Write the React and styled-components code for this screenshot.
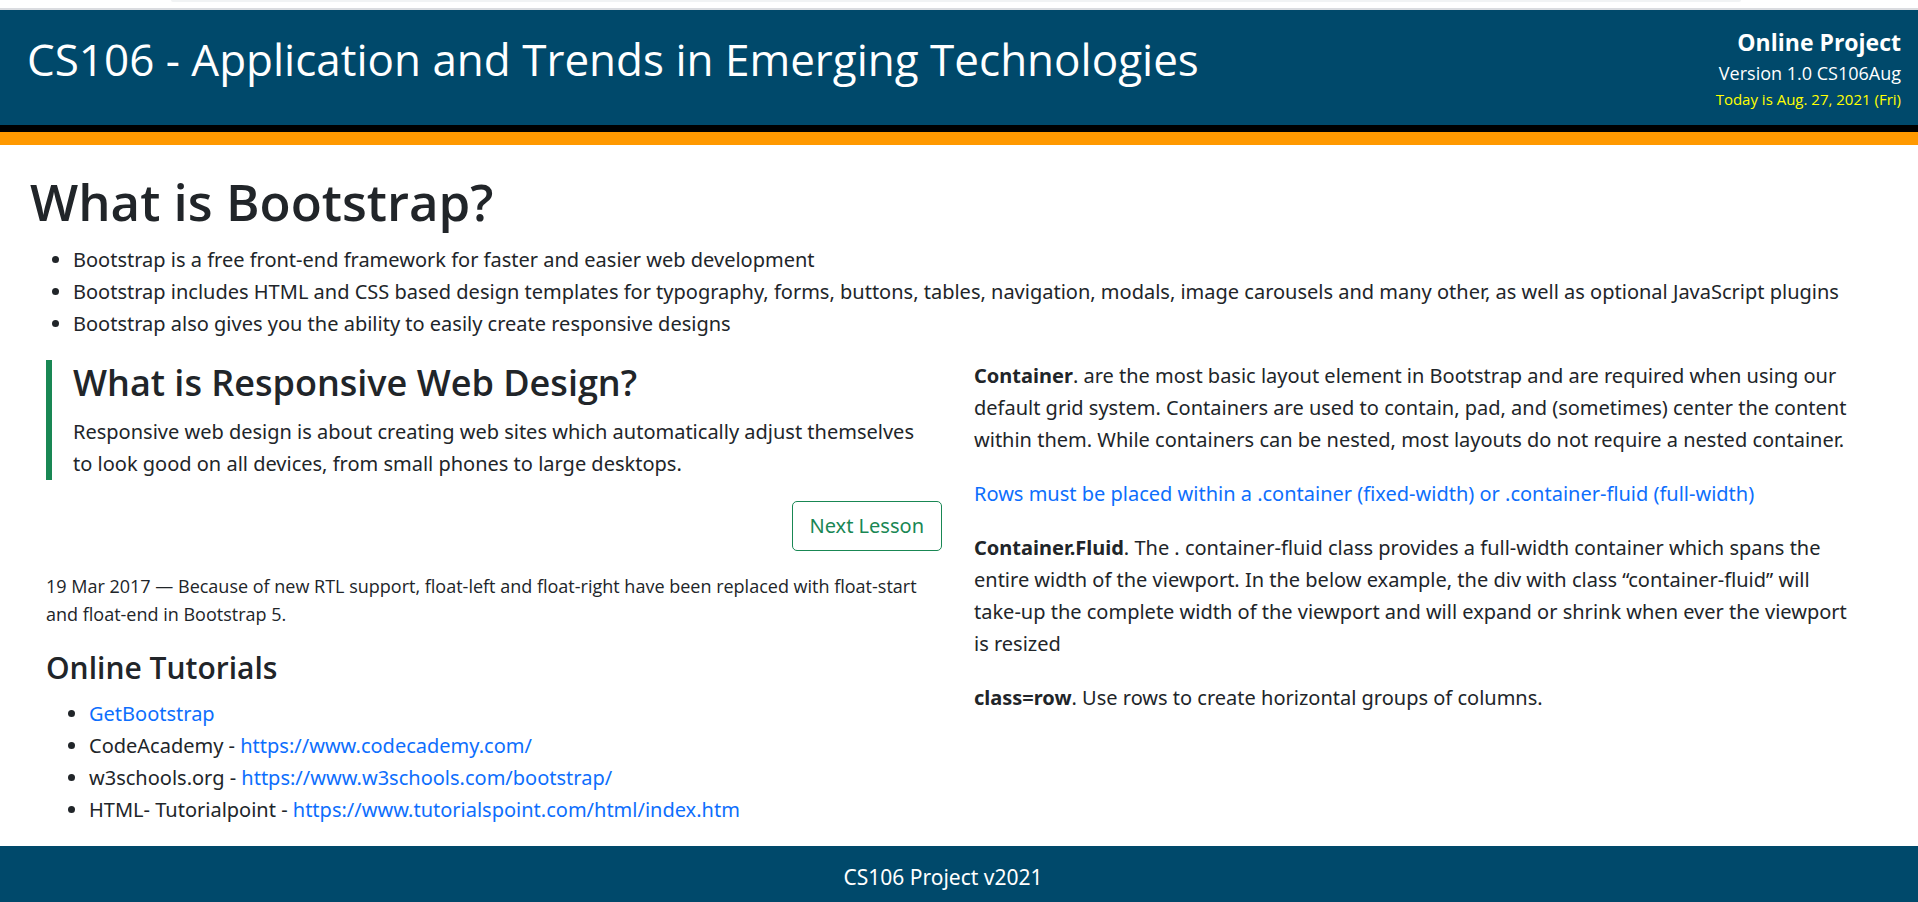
import React from "react";
import styled, { createGlobalStyle } from "styled-components";

const navy = "#00496b";
const green = "#198754";
const blue = "#0d6efd";
const headingFont = `"Segoe UI", "Open Sans", sans-serif`;
const bodyFont = `"Segoe UI", "Noto Sans", "Open Sans", sans-serif`;

const GlobalStyle = createGlobalStyle`
  *, *::before, *::after { box-sizing: border-box; }
  body {
    margin: 0;
    background: #fff;
    color: #212529;
    font-family: ${bodyFont};
    font-size: 20px;
    line-height: 32px;
  }
`;

const Page = styled.div`
  min-height: 100vh;
  display: flex;
  flex-direction: column;
`;

const BrowserEdge = styled.div`
  height: 10px;
  padding: 0 177px 0 171px;
  border-bottom: 2px solid #dadce0;
`;

const AddressBar = styled.div`
  height: 2px;
  background: #f1f3f4;
  border-radius: 0 0 8px 8px;
`;

const Header = styled.header`
  display: flex;
  justify-content: space-between;
  align-items: flex-start;
  padding: 14px 17px 14px 27px;
  color: #fff;
  background: ${navy};
  border-bottom: 7px solid #000;
  font-family: ${headingFont};
`;

const SiteTitle = styled.div`
  font-size: 44px;
  line-height: 70px;
`;

const SiteInfo = styled.div`
  text-align: right;
`;

const InfoLine = styled.div`
  font-size: ${(p) => p.$size}px;
  line-height: ${(p) => p.$line}px;
  font-weight: ${(p) => (p.$bold ? 700 : 400)};
  color: ${(p) => p.$color || "inherit"};
`;

const Stripe = styled.div`
  height: 13px;
  background: #ff9900;
`;

const Main = styled.main`
  flex: 1;
  padding: 24px 48px 20px 46px;
`;

const PageTitle = styled.h1`
  margin: 0 0 11px -16px;
  font-family: ${headingFont};
  font-size: 51px;
  line-height: 64px;
  font-weight: 600;
`;

const List = styled.ul`
  margin: 0 0 ${(p) => (p.$last ? 0 : 20)}px;
  padding-left: ${(p) => (p.$last ? 43 : 27)}px;
`;

const Columns = styled.div`
  display: grid;
  grid-template-columns: 1fr 1fr;
  gap: 32px;
`;

const Callout = styled.section`
  padding: 0 16px 0 21px;
  border-left: 6px solid ${green};
`;

const Reference = styled.div`
  padding-right: 12px;
`;

const SectionTitle = styled.h2`
  margin: 0 0 11px;
  font-family: ${headingFont};
  font-size: 36px;
  line-height: 45px;
  font-weight: 600;
`;

const SubTitle = styled.h3`
  margin: 0 0 11px;
  font-family: ${headingFont};
  font-size: 30px;
  line-height: 38px;
  font-weight: 600;
`;

const Text = styled.p`
  margin: 0 0 ${(p) => (p.$flush ? 0 : 22)}px;
`;

const Note = styled.p`
  margin: 0 0 21px;
  font-family: ${headingFont};
  font-size: 18px;
  line-height: 28px;
`;

const Actions = styled.div`
  display: flex;
  justify-content: flex-end;
  padding: 21px 0;
`;

const OutlineButton = styled.button`
  padding: 8px 17px;
  border: 1px solid ${green};
  border-radius: 5px;
  background: transparent;
  color: ${green};
  font: inherit;
  cursor: pointer;
`;

const Link = styled.a`
  color: ${blue};
  text-decoration: none;
`;

const Highlight = styled(Text)`
  color: ${blue};
`;

const Footer = styled.footer`
  padding: 15px 48px 9px 16px;
  text-align: center;
  font-size: 21px;
  color: #fff;
  background: ${navy};
`;

const facts = [
  "Bootstrap is a free front-end framework for faster and easier web development",
  "Bootstrap includes HTML and CSS based design templates for typography, forms, buttons, tables, navigation, modals, image carousels and many other, as well as optional JavaScript plugins",
  "Bootstrap also gives you the ability to easily create responsive designs",
];

const tutorials = [
  { prefix: "", label: "GetBootstrap", href: "https://getbootstrap.com/" },
  { prefix: "CodeAcademy - ", label: "https://www.codecademy.com/", href: "https://www.codecademy.com/" },
  { prefix: "w3schools.org - ", label: "https://www.w3schools.com/bootstrap/", href: "https://www.w3schools.com/bootstrap/" },
  { prefix: "HTML- Tutorialpoint - ", label: "https://www.tutorialspoint.com/html/index.htm", href: "https://www.tutorialspoint.com/html/index.htm" },
];

export default function App() {
  return (
    <Page>
      <GlobalStyle />
      <BrowserEdge>
        <AddressBar />
      </BrowserEdge>
      <Header>
        <SiteTitle>CS106 - Application and Trends in Emerging Technologies</SiteTitle>
        <SiteInfo>
          <InfoLine $size={23} $line={36} $bold>Online Project</InfoLine>
          <InfoLine $size={18} $line={27}>Version 1.0 CS106Aug</InfoLine>
          <InfoLine $size={15} $line={24} $color="#ffff00">Today is Aug. 27, 2021 (Fri)</InfoLine>
        </SiteInfo>
      </Header>
      <Stripe />
      <Main>
        <PageTitle>What is Bootstrap?</PageTitle>
        <List>
          {facts.map((fact) => (
            <li key={fact}>{fact}</li>
          ))}
        </List>
        <Columns>
          <div>
            <Callout>
              <SectionTitle>What is Responsive Web Design?</SectionTitle>
              <Text $flush>
                Responsive web design is about creating web sites which automatically adjust
                themselves to look good on all devices, from small phones to large desktops.
              </Text>
            </Callout>
            <Actions>
              <OutlineButton type="button">Next Lesson</OutlineButton>
            </Actions>
            <Note>
              19 Mar 2017 — Because of new RTL support, float-left and float-right have been
              replaced with float-start and float-end in Bootstrap 5.
            </Note>
            <SubTitle>Online Tutorials</SubTitle>
            <List $last>
              {tutorials.map((item) => (
                <li key={item.label}>
                  {item.prefix}
                  <Link href={item.href}>{item.label}</Link>
                </li>
              ))}
            </List>
          </div>
          <Reference>
            <Text>
              <b>Container</b>. are the most basic layout element in Bootstrap and are required
              when using our default grid system. Containers are used to contain, pad, and
              (sometimes) center the content within them. While containers can be nested, most
              layouts do not require a nested container.
            </Text>
            <Highlight>
              Rows must be placed within a .container (fixed-width) or .container-fluid
              (full-width)
            </Highlight>
            <Text>
              <b>Container.Fluid</b>. The . container-fluid class provides a full-width container
              which spans the entire width of the viewport. In the below example, the div with
              class “container-fluid” will take-up the complete width of the viewport and will
              expand or shrink when ever the viewport is resized
            </Text>
            <Text $flush>
              <b>class=row</b>. Use rows to create horizontal groups of columns.
            </Text>
          </Reference>
        </Columns>
      </Main>
      <Footer>CS106 Project v2021</Footer>
    </Page>
  );
}
